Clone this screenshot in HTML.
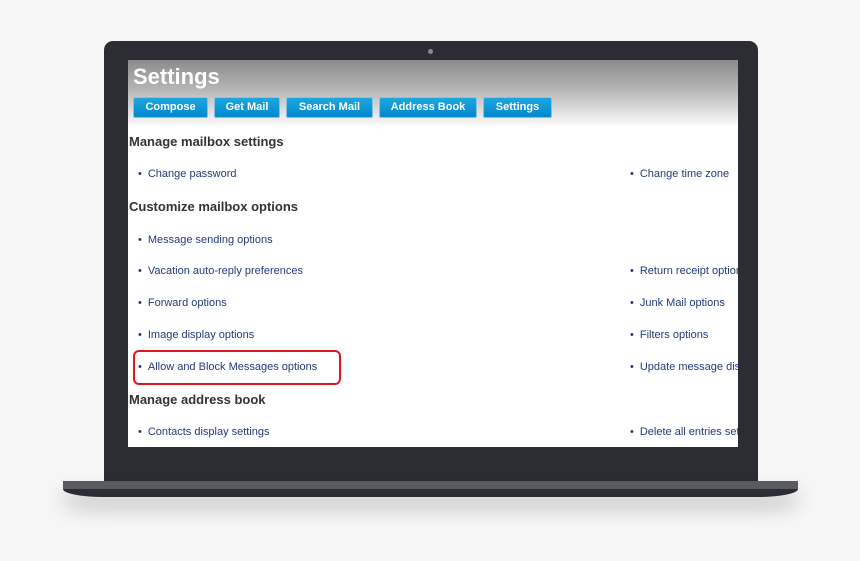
<!DOCTYPE html>
<html><head><style>
body{margin:0;width:860px;height:561px;background:#f6f6f6;position:relative;overflow:hidden;font-family:"Liberation Sans",Arial,sans-serif}
.lap{position:absolute;left:104px;top:41px;width:654px;height:445px;background:#2b2c34;border-radius:9px 9px 0 0}
.cam{position:absolute;left:428px;top:49px;width:5px;height:5px;border-radius:50%;background:#8a8a8e}
.base{position:absolute;left:63px;top:481px;width:735px;height:16px;background:#2b2c34;border-radius:0 0 40px 40px/0 0 8px 8px;box-shadow:0 12px 20px rgba(0,0,0,.2)}
.base:before{content:"";position:absolute;left:0;right:0;top:0;height:8px;background:#5a5b60}
.scr{position:absolute;left:128px;top:60px;width:610px;height:387px;background:#fff;overflow:hidden}
.hd{position:absolute;left:0;top:0;width:610px;height:65px;background:linear-gradient(#8b8b8b,#b5b5b5 45%,#fafafa)}
.hd h1{position:absolute;left:5px;top:4px;margin:0;color:#fff;font-size:22px;font-weight:bold}
.btn{position:absolute;top:37px;height:21px;background:linear-gradient(#1ea6e0,#0288cc);border:1px solid #7fc4e8;box-sizing:border-box;border-radius:2px;color:#fff;font-weight:bold;font-size:11px;line-height:19px;text-align:center}
.h{position:absolute;left:1px;font-size:13px;font-weight:bold;color:#333}
.i{position:absolute;font-size:11px;color:#233a7a;white-space:nowrap}
.i:before{content:"•";margin-right:6px;color:#233a7a}
.red{position:absolute;left:5px;top:290px;width:208px;height:35px;border:2px solid #e4141e;border-radius:6px;box-sizing:border-box}
</style></head><body>
<div class="lap"></div><div class="cam"></div><div class="base"></div>
<div class="scr">
<div class="hd"><h1>Settings</h1>
<div class="btn" style="left:5px;width:75px">Compose</div>
<div class="btn" style="left:86px;width:66px">Get Mail</div>
<div class="btn" style="left:158px;width:87px">Search Mail</div>
<div class="btn" style="left:251px;width:98px">Address Book</div>
<div class="btn" style="left:355px;width:69px">Settings</div>
</div>
<div class="h" style="top:74px">Manage mailbox settings</div>
<div class="i" style="left:10px;top:108px">Change password</div>
<div class="i" style="left:502px;top:108px">Change time zone</div>
<div class="h" style="top:139px">Customize mailbox options</div>
<div class="i" style="left:10px;top:174px">Message sending options</div>
<div class="i" style="left:10px;top:205px">Vacation auto-reply preferences</div>
<div class="i" style="left:502px;top:205px">Return receipt options</div>
<div class="i" style="left:10px;top:237px">Forward options</div>
<div class="i" style="left:502px;top:237px">Junk Mail options</div>
<div class="i" style="left:10px;top:269px">Image display options</div>
<div class="i" style="left:502px;top:269px">Filters options</div>
<div class="i" style="left:10px;top:301px">Allow and Block Messages options</div>
<div class="i" style="left:502px;top:301px">Update message display</div>
<div class="red"></div>
<div class="h" style="top:332px">Manage address book</div>
<div class="i" style="left:10px;top:366px">Contacts display settings</div>
<div class="i" style="left:502px;top:366px">Delete all entries settings</div>
</div>
</body></html>
